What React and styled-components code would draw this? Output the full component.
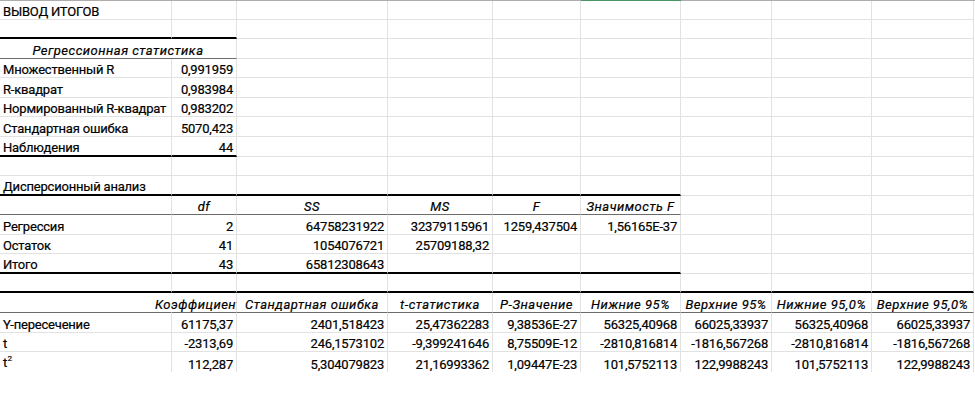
import styled, { createGlobalStyle, css } from "styled-components";

const COLS = [172, 65, 151, 105, 88, 100, 91, 100, 102];
const ROW_H = 19.57;

const GlobalStyle = createGlobalStyle`
  html, body {
    margin: 0;
    background: #fff;
  }
  body {
    font-family: Roboto, "Liberation Sans", Arial, sans-serif;
    font-size: 13px;
    color: #000;
  }
`;

const Page = styled.div`
  width: 975px;
  height: 393px;
  overflow: hidden;
  background: #fff;
`;

const Ruler = styled.div`
  display: grid;
  grid-template-columns: ${COLS.map((c) => `${c}px`).join(" ")} 1fr;
  height: 1px;
`;

const RulerSegment = styled.div`
  background: ${({ $active }) => ($active ? "#4a9466" : "#adadad")};
`;

const Sheet = styled.div`
  display: grid;
  grid-template-columns: ${COLS.map((c) => `${c}px`).join(" ")};
  grid-template-rows: ${ROW_H - 1}px;
  grid-auto-rows: ${ROW_H}px;
`;

const bottoms = {
  grid: css`
    border-bottom: 1px solid #e2e2e2;
  `,
  thin: css`
    border-bottom: 1px solid #6b6b6b;
  `,
  thick: css`
    border-bottom: 2px solid #000;
  `,
  none: css`
    border-bottom: 0;
  `,
};

const Cell = styled.div`
  box-sizing: border-box;
  display: flex;
  align-items: flex-end;
  justify-content: ${({ $align }) =>
    $align === "right" ? "flex-end" : $align === "center" ? "center" : "flex-start"};
  grid-column: span ${({ $span }) => $span || 1};
  padding: 0 3px;
  line-height: 15px;
  white-space: nowrap;
  overflow: visible;
  background: #fff;
  font-style: ${({ $italic }) => ($italic ? "italic" : "normal")};
  letter-spacing: ${({ $italic }) => ($italic ? "0.5px" : "-0.2px")};
  -webkit-text-stroke: 0.2px #000;
  border-right: 1px solid ${({ $noRight }) => ($noRight ? "transparent" : "#e2e2e2")};
  ${({ $bottom }) => bottoms[$bottom || "grid"]}
`;

const Squared = styled.span`
  position: relative;
`;

const Sup = styled.span`
  font-size: 8px;
  position: relative;
  top: -6px;
  margin-left: 0.5px;
`;

// one entry per row: cells are [text, options]
const L = (t) => [t, {}];
const R = (t) => [t, { $align: "right" }];
const H = (t) => [t, { $align: "center", $italic: true }];
const E = ["", {}];

const ROWS = [
  { cells: [L("ВЫВОД ИТОГОВ")] },
  { cells: [], thick: 2 },
  { cells: [["Регрессионная статистика", { $align: "center", $italic: true, $span: 2 }]], thin: 2 },
  { cells: [L("Множественный R"), R("0,991959")] },
  { cells: [L("R-квадрат"), R("0,983984")] },
  { cells: [L("Нормированный R-квадрат"), R("0,983202")] },
  { cells: [L("Стандартная ошибка"), R("5070,423")] },
  { cells: [L("Наблюдения"), R("44")], thick: 2 },
  { cells: [] },
  { cells: [L("Дисперсионный анализ")], thick: 6 },
  { cells: [E, H("df"), H("SS"), H("MS"), H("F"), H("Значимость F")], thin: 6 },
  {
    cells: [L("Регрессия"), R("2"), R("64758231922"), R("32379115961"), R("1259,437504"), R("1,56165E-37")],
  },
  { cells: [L("Остаток"), R("41"), R("1054076721"), R("25709188,32")] },
  { cells: [L("Итого"), R("43"), R("65812308643")], thick: 6 },
  { cells: [], thick: 9 },
  {
    cells: [
      [" ", { $noRight: true }],
      H("Коэффициенты"),
      H("Стандартная ошибка"),
      H("t-статистика"),
      H("P-Значение"),
      H("Нижние 95%"),
      H("Верхние 95%"),
      H("Нижние 95,0%"),
      H("Верхние 95,0%"),
    ],
    thin: 9,
  },
  {
    cells: [
      L("Y-пересечение"), R("61175,37"), R("2401,518423"), R("25,47362283"), R("9,38536E-27"),
      R("56325,40968"), R("66025,33937"), R("56325,40968"), R("66025,33937"),
    ],
  },
  {
    cells: [
      L("t"), R("-2313,69"), R("246,1573102"), R("-9,399241646"), R("8,75509E-12"),
      R("-2810,816814"), R("-1816,567268"), R("-2810,816814"), R("-1816,567268"),
    ],
  },
  {
    cells: [
      [<Squared>t<Sup>2</Sup></Squared>, {}], R("112,287"), R("5,304079823"), R("21,16993362"),
      R("1,09447E-23"), R("101,5752113"), R("122,9988243"), R("101,5752113"), R("122,9988243"),
    ],
    last: true,
  },
];

const buildRow = (row, r) => {
  const out = [];
  let col = 0;
  for (let i = 0; col < COLS.length; i++) {
    const [text, opts] = row.cells[i] || E;
    let bottom = "grid";
    if (row.thick && col < row.thick) bottom = "thick";
    if (row.thin && col < row.thin) bottom = "thin";
    if (row.last) bottom = "none";
    out.push(
      <Cell key={`${r}-${col}`} {...opts} $bottom={bottom}>
        {text}
      </Cell>
    );
    col += opts.$span || 1;
  }
  return out;
};

const App = () => {
  return (
    <Page>
      <GlobalStyle />
      <Ruler>
        {COLS.map((_, i) => (
          <RulerSegment key={i} $active={i === 5} />
        ))}
        <RulerSegment />
      </Ruler>
      <Sheet>{ROWS.map((row, r) => buildRow(row, r))}</Sheet>
    </Page>
  );
};

export default App;
